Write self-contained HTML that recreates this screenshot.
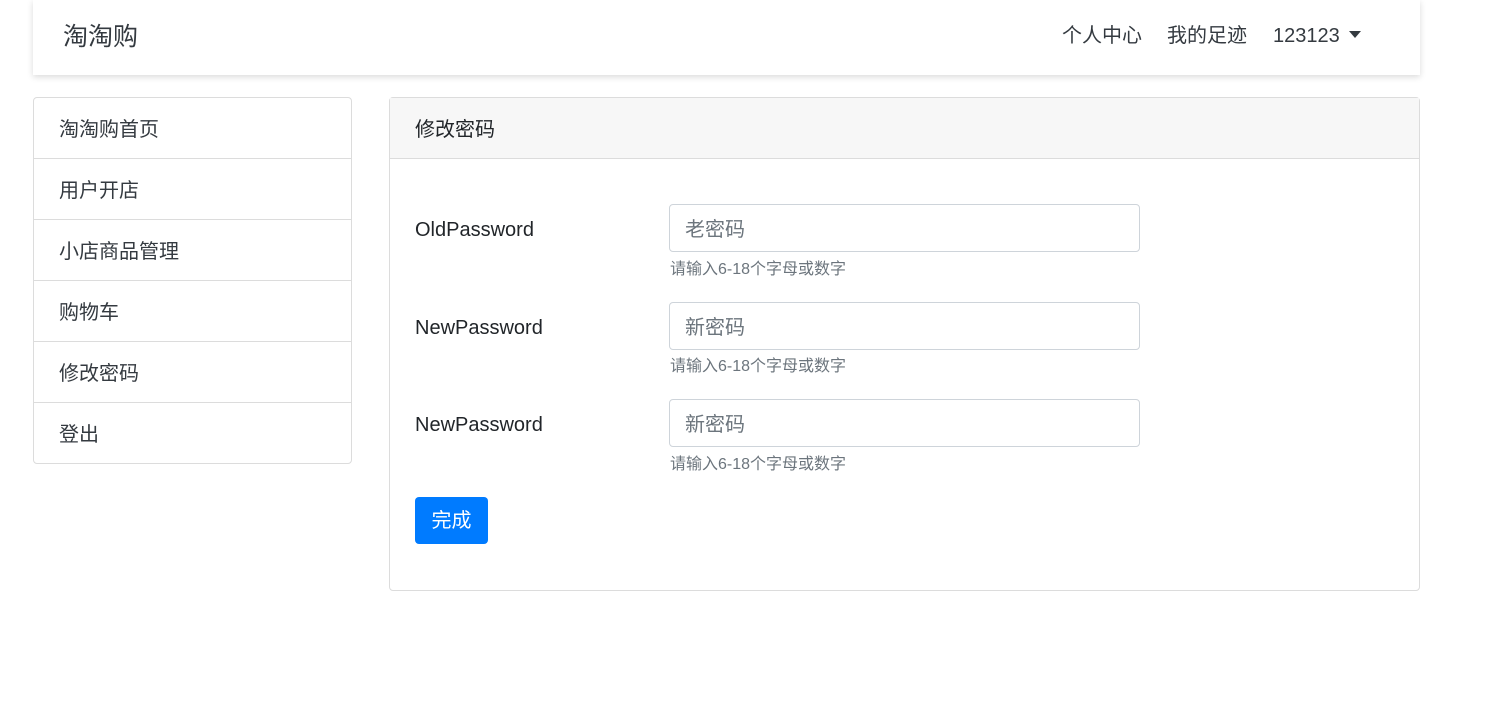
<!DOCTYPE html>
<html><head><meta charset="utf-8"><style>
*{box-sizing:border-box;margin:0;padding:0}
body{width:1490px;height:711px;background:#fff;font-family:"Liberation Sans","Noto Sans CJK SC",sans-serif;color:#212529;position:relative;overflow:hidden;font-size:20px}
.nav{position:absolute;left:33px;top:0;width:1387px;height:75px;background:#fff;box-shadow:0 2px 6px rgba(0,0,0,.15)}
.brand{position:absolute;left:30px;top:19px;font-size:25px;line-height:36px;color:#343a40}
.ni{position:absolute;top:21px;font-size:20px;line-height:30px;color:#343a40}
.caret{position:absolute;left:1316px;top:31px;width:0;height:0;border-left:6px solid transparent;border-right:6px solid transparent;border-top:7px solid #343a40}
.list{position:absolute;left:33px;top:97px;width:319px;border:1px solid #dcdcdc;border-radius:4px}
.li{height:61px;padding:17px 25px 13px;line-height:30px;border-top:1px solid #dcdcdc;color:#343a40}
.li:first-child{border-top:none;height:60px}
.card{position:absolute;left:389px;top:97px;width:1031px;height:494px;border:1px solid #dcdcdc;border-radius:4px}
.ch{height:61px;background:#f7f7f7;border-bottom:1px solid #dcdcdc;padding:17px 25px 13px;line-height:30px}
.lab{position:absolute;left:25px;line-height:30px}
.inp{position:absolute;left:279px;width:471px;height:48px;border:1px solid #ced4da;border-radius:4px;padding:2px 15px 0;line-height:46px;color:#6c757d}
.help{position:absolute;left:280px;font-size:16px;color:#6c757d;line-height:20px}
.btn{position:absolute;left:25px;top:399px;width:73px;height:47px;background:#007bff;color:#fff;border-radius:4px;text-align:center;line-height:49px}
</style></head><body>
<div class="nav">
<div class="brand">淘淘购</div>
<div class="ni" style="left:1029px">个人中心</div>
<div class="ni" style="left:1134px">我的足迹</div>
<div class="ni" style="left:1240px">123123</div>
<div class="caret"></div>
</div>
<div class="list">
<div class="li">淘淘购首页</div><div class="li">用户开店</div><div class="li">小店商品管理</div><div class="li">购物车</div><div class="li">修改密码</div><div class="li">登出</div>
</div>
<div class="card">
<div class="ch">修改密码</div>
<div class="lab" style="top:117px">OldPassword</div>
<div class="inp" style="top:106px">老密码</div>
<div class="help" style="top:162px">请输入6-18个字母或数字</div>
<div class="lab" style="top:215px">NewPassword</div>
<div class="inp" style="top:204px">新密码</div>
<div class="help" style="top:259px">请输入6-18个字母或数字</div>
<div class="lab" style="top:312px">NewPassword</div>
<div class="inp" style="top:301px">新密码</div>
<div class="help" style="top:357px">请输入6-18个字母或数字</div>
<div class="btn">完成</div>
</div>
</body></html>
